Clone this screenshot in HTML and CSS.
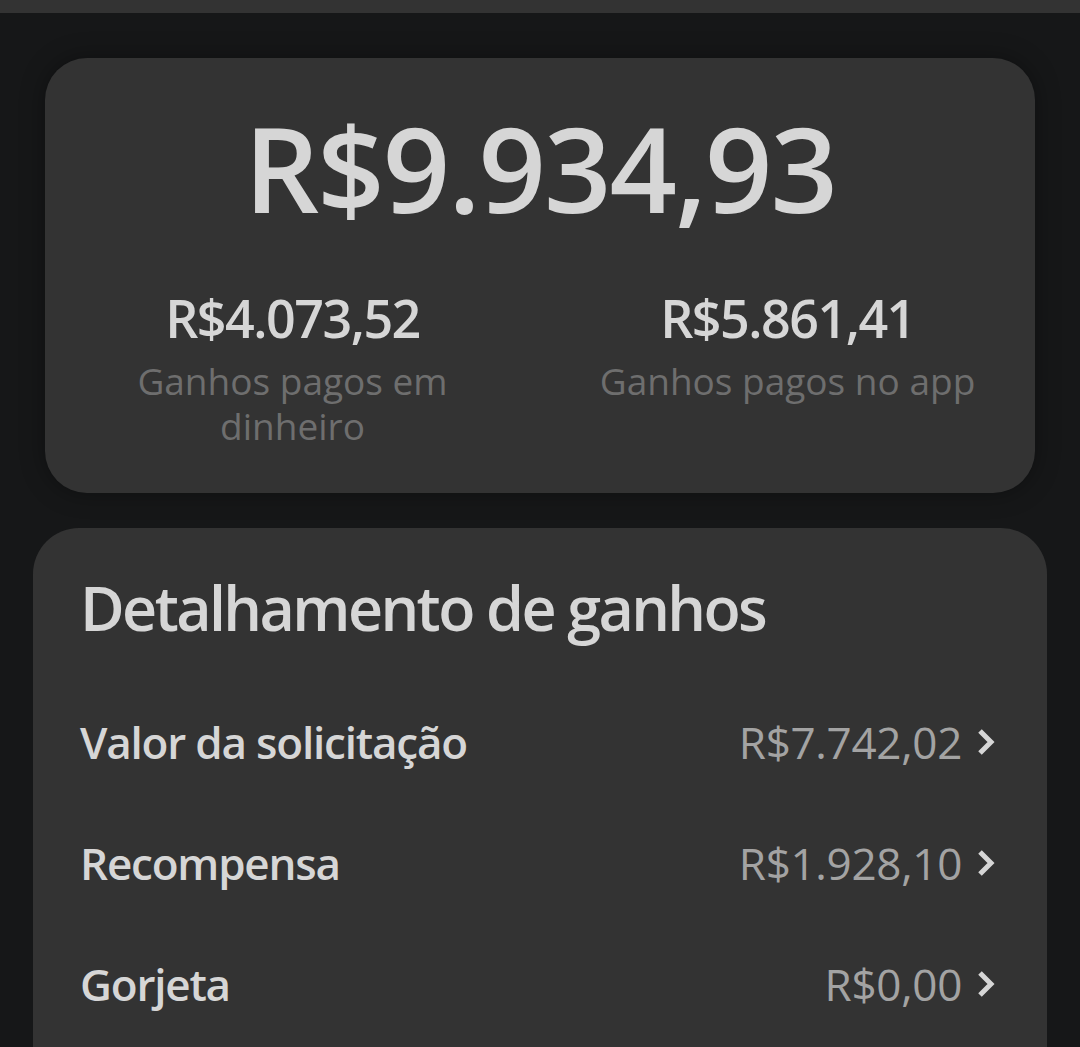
FILE: index.html
```html
<!DOCTYPE html>
<html lang="pt-BR">
<head>
    <meta charset="UTF-8">
    <meta name="viewport" content="width=device-width, initial-scale=1.0">
    <title>Ganhos</title>
    <link rel="stylesheet" href="styles.css">
</head>
<body>
    <div class="top-bar"></div>

    <div class="summary-card">
        <div class="total">R$9.934,93</div>
        <div class="split">
            <div class="split-item">
                <div class="split-value">R$4.073,52</div>
                <div class="split-label">Ganhos pagos em<br>dinheiro</div>
            </div>
            <div class="split-item">
                <div class="split-value">R$5.861,41</div>
                <div class="split-label">Ganhos pagos no app</div>
            </div>
        </div>
    </div>

    <div class="details-card">
        <h2>Detalhamento de ganhos</h2>

        <div class="row">
            <span class="row-name">Valor da solicitação</span>
            <span class="row-value">R$7.742,02</span>
            <svg class="chevron" viewBox="0 0 20 30"><path d="M4 4l11 11-11 11"/></svg>
        </div>
        <div class="row">
            <span class="row-name">Recompensa</span>
            <span class="row-value">R$1.928,10</span>
            <svg class="chevron" viewBox="0 0 20 30"><path d="M4 4l11 11-11 11"/></svg>
        </div>
        <div class="row">
            <span class="row-name">Gorjeta</span>
            <span class="row-value">R$0,00</span>
            <svg class="chevron" viewBox="0 0 20 30"><path d="M4 4l11 11-11 11"/></svg>
        </div>
    </div>
</body>
</html>
```

FILE: styles.css
```css
html, body {
    margin: 0;
    padding: 0;
    background-color: #161718;
    font-family: "Open Sans", Arial, sans-serif;
    color: #d6d6d6;
    overflow: hidden;
}

.top-bar {
    height: 13px;
    background-color: #333333;
}

.summary-card {
    margin: 45px 45px 0;
    height: 435px;
    box-sizing: border-box;
    padding-top: 40px;
    background-color: #333333;
    border-radius: 42px;
    box-shadow: 0 0 24px rgba(0, 0, 0, 0.35);
}

.total {
    text-align: center;
    font-size: 118px;
    font-weight: 600;
    line-height: 140px;
    letter-spacing: -2px;
}

.split {
    display: flex;
    margin-top: 50px;
}

.split-item {
    flex: 1;
    text-align: center;
}

.split-value {
    font-size: 52px;
    font-weight: 600;
    line-height: 60px;
    letter-spacing: -1.5px;
}

.split-label {
    margin-top: 10px;
    font-size: 37px;
    line-height: 45px;
    color: #6e6e6e;
}

.details-card {
    margin: 35px 33px 0;
    height: 600px;
    padding: 40px 51px 0 47px;
    background-color: #333333;
    border-radius: 46px;
}

.details-card h2 {
    margin: 0 0 33px;
    font-size: 61px;
    font-weight: 600;
    line-height: 80px;
    letter-spacing: -2.6px;
}

.row {
    display: flex;
    align-items: center;
    height: 121px;
}

.row-name {
    flex: 1;
    font-size: 44px;
    font-weight: 600;
    letter-spacing: -1.2px;
}

.row-value {
    font-size: 44px;
    color: #a3a3a3;
    letter-spacing: -0.3px;
}

.chevron {
    width: 20px;
    height: 30px;
    margin-left: 14px;
    fill: none;
    stroke: #d6d6d6;
    stroke-width: 5;
}
```
